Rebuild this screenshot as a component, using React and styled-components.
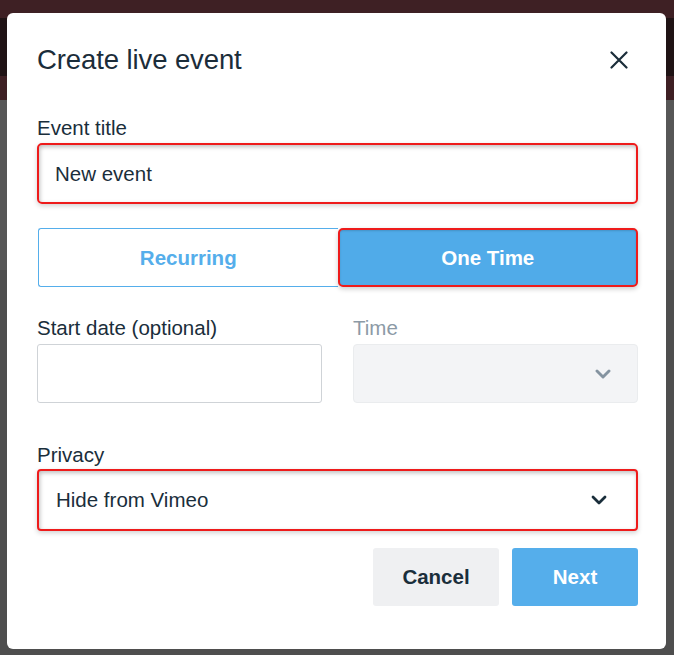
import React from 'react';
import styled, { createGlobalStyle } from 'styled-components';

const GlobalStyle = createGlobalStyle`
  html, body {
    margin: 0;
    padding: 0;
  }
  body {
    font-family: 'Liberation Sans', Arial, sans-serif;
    color: #1a2e3b;
  }
  * {
    box-sizing: border-box;
  }
`;

const Backdrop = styled.div`
  width: 674px;
  height: 655px;
  padding: 13px 8px 6px 7px;
  background: linear-gradient(
    to bottom,
    #3e2024 0 18px,
    #1f1315 18px 76px,
    #3e2024 76px 100px,
    #575757 100px 270px,
    #4e4e4e 270px
  );
`;

const Modal = styled.div`
  height: 636px;
  background: #fff;
  border-radius: 6px;
  padding: 30px 28px 0 30px;
  display: flex;
  flex-direction: column;
`;

const Header = styled.div`
  display: flex;
  align-items: center;
  justify-content: space-between;
  height: 34px;
  margin-bottom: 39px;
`;

const Title = styled.h2`
  margin: 0;
  font-size: 27.5px;
  line-height: 34px;
  font-weight: 400;
  letter-spacing: -0.1px;
  color: #1b2d3a;
`;

const CloseButton = styled.button`
  width: 30px;
  height: 30px;
  margin-right: 4px;
  border: none;
  background: none;
  padding: 0;
  display: flex;
  align-items: center;
  justify-content: center;
  color: #1b2d3a;
`;

const Label = styled.label`
  display: block;
  font-size: 20.5px;
  line-height: 24px;
  color: ${(p) => (p.$muted ? '#8c9aa6' : '#1a2e3b')};
  margin-bottom: ${(p) => p.$gap || 3}px;
`;

const focusRing = `
  border: 2px solid #ee1b1b;
  box-shadow: inset 1px 2px 4px rgba(0, 0, 0, 0.25), 0 2px 5px rgba(0, 0, 0, 0.18);
`;

const TextInput = styled.div`
  height: ${(p) => p.$height || 61}px;
  border-radius: 5px;
  padding: 0 16px;
  display: flex;
  align-items: center;
  font-size: 20.5px;
  color: #1a2e3b;
  ${(p) => (p.$focused ? focusRing : 'border: 1px solid #cfd3d7; border-radius: 3px;')}
`;

const Toggle = styled.div`
  display: grid;
  grid-template-columns: 1fr 1fr;
  height: 59px;
  margin-top: 24px;
`;

const ToggleButton = styled.button`
  font-family: inherit;
  font-size: 20.5px;
  font-weight: 700;
  height: 100%;
  cursor: pointer;
  ${(p) =>
    p.$active
      ? `
    background: #50abe9;
    color: #fff;
    border: 2px solid #ee1b1b;
    border-radius: 5px;
    box-shadow: inset 0 1px 2px rgba(0, 0, 0, 0.15), 0 2px 5px rgba(0, 0, 0, 0.2);
  `
      : `
    background: #fff;
    color: #55aeeb;
    border: 1px solid #55aeeb;
    border-right: none;
    border-radius: 3px 0 0 3px;
    margin-left: 1px;
  `}
`;

const Row = styled.div`
  display: grid;
  grid-template-columns: 1fr 1fr;
  column-gap: 31px;
  margin-top: 29px;
`;

const Field = styled.div`
  display: flex;
  flex-direction: column;
`;

const Select = styled.div`
  height: ${(p) => p.$height || 59}px;
  display: flex;
  align-items: center;
  justify-content: space-between;
  padding: 0 ${(p) => p.$padRight || 28}px 0 17px;
  font-size: 20.5px;
  border-radius: 4px;
  color: ${(p) => (p.$disabled ? '#8c9aa6' : '#1a2e3b')};
  ${(p) =>
    p.$disabled
      ? 'background: #f3f4f6; border: 1px solid #eaecee;'
      : focusRing}
`;

const PrivacyField = styled.div`
  margin-top: 40px;
`;

const Footer = styled.div`
  display: flex;
  justify-content: flex-end;
  gap: 13px;
  margin-top: 17px;
`;

const ActionButton = styled.button`
  width: 126px;
  height: 58px;
  border: none;
  border-radius: 3px;
  font-family: inherit;
  font-size: 20.5px;
  font-weight: 700;
  background: ${(p) => (p.$primary ? '#55aeeb' : '#eff0f2')};
  color: ${(p) => (p.$primary ? '#fff' : '#1a2e3b')};
  cursor: pointer;
`;

const Chevron = ({ color, width = 2.4 }) => (
  <svg width="16" height="10" viewBox="0 0 16 10" fill="none">
    <path d="M2 2l6 6 6-6" stroke={color} strokeWidth={width} strokeLinecap="round" strokeLinejoin="round" />
  </svg>
);

const App = () => {
  return (
    <>
      <GlobalStyle />
      <Backdrop>
        <Modal>
          <Header>
            <Title>Create live event</Title>
            <CloseButton aria-label="Close">
              <svg width="18" height="18" viewBox="0 0 18 18">
                <path d="M1.5 1.5l15 15M16.5 1.5l-15 15" stroke="currentColor" strokeWidth="2.2" strokeLinecap="round" />
              </svg>
            </CloseButton>
          </Header>

          <Field>
            <Label>Event title</Label>
            <TextInput $focused>New event</TextInput>
          </Field>

          <Toggle>
            <ToggleButton>Recurring</ToggleButton>
            <ToggleButton $active>One Time</ToggleButton>
          </Toggle>

          <Row>
            <Field>
              <Label $gap={4}>Start date (optional)</Label>
              <TextInput $height={59} />
            </Field>
            <Field>
              <Label $gap={4} $muted>
                Time
              </Label>
              <Select $disabled $padRight={26}>
                <span />
                <Chevron color="#8493a0" width={2.9} />
              </Select>
            </Field>
          </Row>

          <PrivacyField>
            <Label $gap={2}>Privacy</Label>
            <Select $height={62} $padRight={29}>
              <span>Hide from Vimeo</span>
              <Chevron color="#1a2e3b" width={2.8} />
            </Select>
          </PrivacyField>

          <Footer>
            <ActionButton>Cancel</ActionButton>
            <ActionButton $primary>Next</ActionButton>
          </Footer>
        </Modal>
      </Backdrop>
    </>
  );
};

export default App;
